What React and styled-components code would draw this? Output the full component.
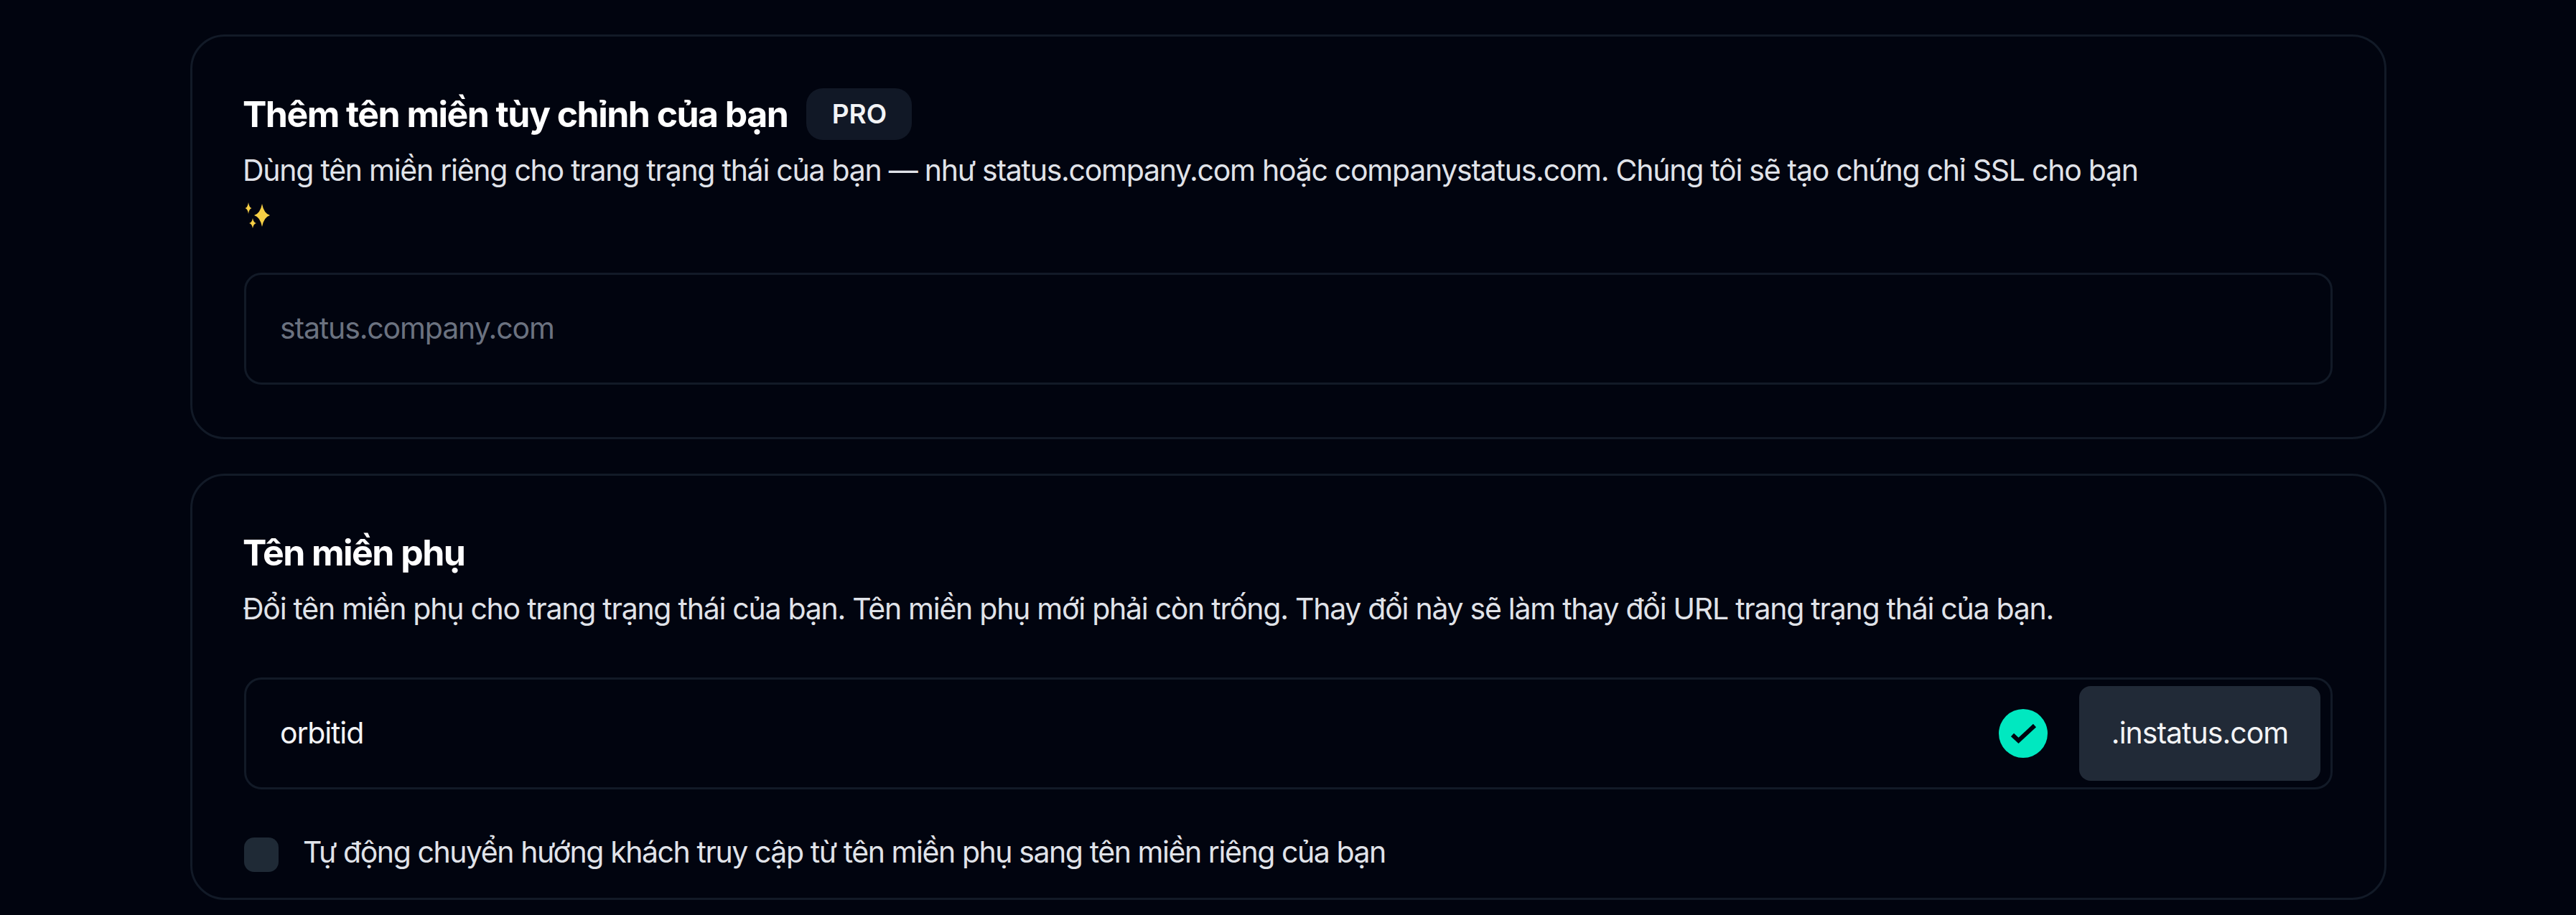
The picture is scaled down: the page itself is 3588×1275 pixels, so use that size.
import React from "react";
import styled, { createGlobalStyle } from "styled-components";

const GlobalStyle = createGlobalStyle`
  html, body {
    margin: 0;
    padding: 0;
    background: #01040f;
  }
  * {
    box-sizing: border-box;
  }
`;

const star = (cx, cy, hw, hh, k) =>
  `M${cx} ${cy - hh}Q${cx + k} ${cy - k} ${cx + hw} ${cy}Q${cx + k} ${cy + k} ${cx} ${cy + hh}Q${cx - k} ${cy + k} ${cx - hw} ${cy}Q${cx - k} ${cy - k} ${cx} ${cy - hh}Z`;

function Sparkles() {
  return (
    <SparkleIcon viewBox="0 0 38 38" aria-label="sparkles">
      <path d={star(25, 19, 11, 16, 2.5)} fill="#f6cf45" />
      <path d={star(6, 9, 4.5, 8, 1)} fill="#f6cf45" />
      <path d={star(12, 30, 5, 7, 1)} fill="#f6cf45" />
    </SparkleIcon>
  );
}

function CheckBadge() {
  return (
    <CheckCircle>
      <svg viewBox="0 0 68 68" width="68" height="68">
        <path d="M19 36l8.500 8L50 23" fill="none" stroke="#01040f" strokeWidth="6" />
      </svg>
    </CheckCircle>
  );
}

export default function App() {
  return (
    <Page>
      <GlobalStyle />
      <Card>
        <TitleRow>
          <Title>Thêm tên miền tùy chỉnh của bạn</Title>
          <Badge>PRO</Badge>
        </TitleRow>
        <Description>
          Dùng tên miền riêng cho trang trạng thái của bạn — như status.company.com hoặc companystatus.com. Chúng tôi sẽ tạo chứng chỉ SSL cho bạn
          <br />
          <Sparkles />
        </Description>
        <Field>
          <FieldInput placeholder="status.company.com" readOnly />
        </Field>
      </Card>
      <Card $second>
        <TitleRow>
          <Title>Tên miền phụ</Title>
        </TitleRow>
        <Description>
          Đổi tên miền phụ cho trang trạng thái của bạn. Tên miền phụ mới phải còn trống. Thay đổi này sẽ làm thay đổi URL trang trạng thái của bạn.
        </Description>
        <Field $withSuffix>
          <FieldInput defaultValue="orbitid" readOnly />
          <CheckBadge />
          <Suffix>.instatus.com</Suffix>
        </Field>
        <CheckRow>
          <CheckBox />
          <CheckLabel>Tự động chuyển hướng khách truy cập từ tên miền phụ sang tên miền riêng của bạn</CheckLabel>
        </CheckRow>
      </Card>
    </Page>
  );
}

const Page = styled.div`
  display: flex;
  flex-direction: column;
  gap: 48px;
  width: 3588px;
  height: 1275px;
  padding: 48px 264px 0 265px;
  overflow: hidden;
  background: #01040f;
  font-family: Inter, "Noto Sans", sans-serif;
`;
const Card = styled.section`
  display: flex;
  flex-direction: column;
  height: ${(p) => (p.$second ? "594px" : "564px")};
  padding: ${(p) => (p.$second ? "71px" : "72px")} 72px 0 70px;
  border: 3px solid #121a27;
  border-radius: 48px;
`;
const TitleRow = styled.div`
  display: flex;
  align-items: center;
  gap: 26px;
  height: 72px;
`;
const Title = styled.h2`
  margin: 0;
  color: #fff;
  font-size: 50px;
  font-weight: 700;
  letter-spacing: -1.55px;
  white-space: nowrap;
`;
const Badge = styled.span`
  display: flex;
  align-items: center;
  justify-content: center;
  width: 147px;
  height: 72px;
  padding-bottom: 2px;
  border-radius: 23px;
  background: #111826;
  color: #f3f4f6;
  font-size: 37px;
  font-weight: 600;
`;
const Description = styled.p`
  margin: 10px 0 0;
  color: #e0e3e9;
  font-size: 41px;
  line-height: 64px;
  letter-spacing: -1.265px;
  white-space: nowrap;
`;
const SparkleIcon = styled.svg`
  display: inline-block;
  width: 38px;
  height: 38px;
  margin-left: 2px;
  vertical-align: -3px;
`;
const Field = styled.div`
  display: flex;
  align-items: center;
  height: 156px;
  margin: ${(p) => (p.$withSuffix ? "64px" : "47px")} 0 0 2px;
  padding: 0 14px 0 47px;
  border: 3px solid #121a27;
  border-radius: 24px;
`;
const FieldInput = styled.input`
  flex: 1;
  min-width: 0;
  padding: 0 0 3px;
  border: 0;
  outline: 0;
  background: transparent;
  color: #f3f4f6;
  font-family: inherit;
  font-size: 41px;
  letter-spacing: -1.15px;
  &::placeholder {
    color: #6b7280;
    opacity: 1;
  }
`;
const CheckCircle = styled.span`
  display: flex;
  flex: none;
  width: 68px;
  height: 68px;
  margin-right: 44px;
  border-radius: 50%;
  background: #00e8c0;
`;
const Suffix = styled.span`
  display: flex;
  align-items: center;
  justify-content: center;
  flex: none;
  width: 336px;
  height: 132px;
  padding-bottom: 3px;
  border-radius: 16px;
  background: #212a37;
  color: #f3f4f6;
  font-size: 41px;
  letter-spacing: -1px;
`;
const CheckRow = styled.label`
  display: flex;
  align-items: center;
  gap: 34px;
  margin: 62px 0 0 2px;
`;
const CheckBox = styled.span`
  flex: none;
  width: 48px;
  height: 48px;
  border-radius: 14px;
  background: #1f2a36;
`;
const CheckLabel = styled.span`
  padding-bottom: 8px;
  color: #e0e3e9;
  font-size: 41px;
  letter-spacing: -1.44px;
`;
